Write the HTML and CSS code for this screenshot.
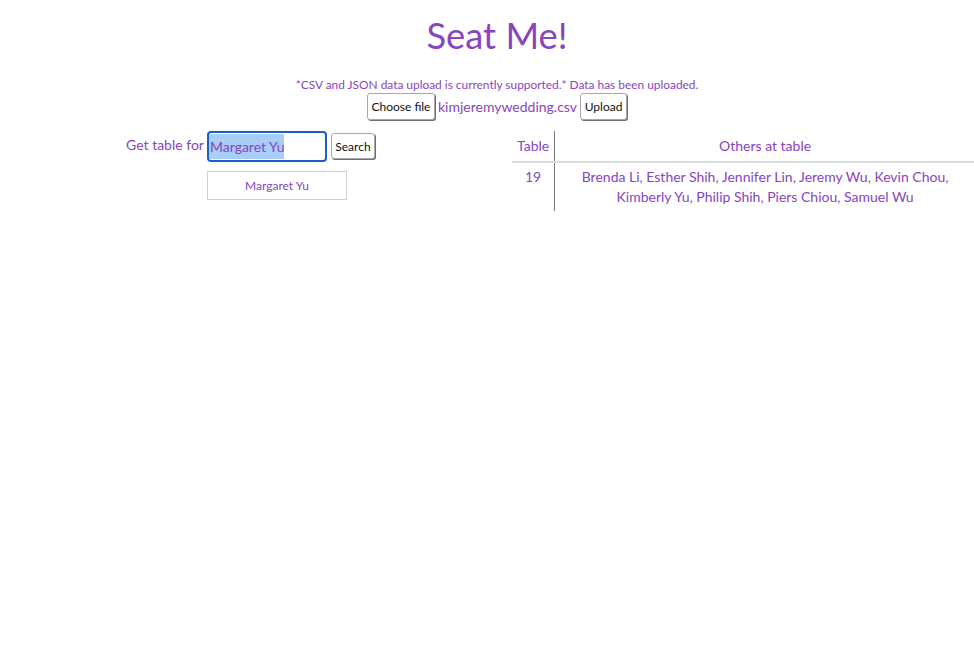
FILE: index.html
```html
<!DOCTYPE html>
<html lang="en">
<head>
<meta charset="utf-8">
<title>Seat Me!</title>
<link rel="stylesheet" href="styles.css">
</head>
<body>
<div class="page">
  <h1 class="title">Seat Me!</h1>
  <p class="note">*CSV and JSON data upload is currently supported.* Data has been uploaded.</p>
  <div class="upload">
    <button class="btn btn-file">Choose file</button>
    <span class="filename">kimjeremywedding.csv</span>
    <button class="btn btn-upload">Upload</button>
  </div>
  <div class="main">
    <div class="col col-left">
      <div class="search">
        <span class="label">Get table for</span>
        <div class="field">
          <div class="input"><span class="sel">Margaret Yu</span></div>
          <div class="suggest">Margaret Yu</div>
        </div>
        <button class="btn btn-search">Search</button>
      </div>
    </div>
    <div class="col col-right">
      <table class="seats">
        <thead>
          <tr><th class="c-table">Table</th><th class="c-others">Others at table</th></tr>
        </thead>
        <tbody>
          <tr><td class="c-table">19</td><td class="c-others">Brenda Li, Esther Shih, Jennifer Lin, Jeremy Wu, Kevin Chou, Kimberly Yu, Philip Shih, Piers Chiou, Samuel Wu</td></tr>
        </tbody>
      </table>
    </div>
  </div>
</div>
</body>
</html>
```
FILE: styles.css
```css
html, body {
  margin: 0;
  padding: 0;
  overflow: hidden;
  background: #fff;
}
body {
  font-family: Lato, "Noto Sans", sans-serif;
  color: #8745c1;
}
.page {
  width: 994px;
}
.title {
  margin: 13px 0 0;
  font-size: 36.3px;
  font-weight: 400;
  line-height: 44px;
  text-align: center;
}
.note {
  margin: 20px 0 0;
  font-size: 11.9px;
  line-height: 16px;
  text-align: center;
}
.upload {
  display: flex;
  justify-content: center;
  align-items: center;
  gap: 3px;
  margin-top: 0;
}
.btn {
  font-family: Lato, "Noto Sans", sans-serif;
  font-size: 12px;
  color: #111;
  background: #fff;
  border: 1px solid #a8a8a8;
  border-radius: 3px;
  box-shadow: 1px 1px 0 #6f6f6f;
  padding: 0 2px;
  height: 27px;
  margin: 0;
  white-space: nowrap;
}
.btn-file { width: 68px; }
.btn-upload { width: 47px; }
.filename {
  font-size: 14px;
  line-height: 20px;
}
.main {
  display: flex;
  margin-top: 11px;
}
.col {
  flex: 0 0 497px;
}
.search {
  display: flex;
  justify-content: center;
  align-items: flex-start;
  padding-left: 4px;
}
.label {
  font-size: 14px;
  line-height: 20px;
  margin-top: 4px;
  margin-right: 3px;
}
.field {
  position: relative;
  width: 120px;
}
.input {
  box-sizing: border-box;
  width: 120px;
  height: 31px;
  border: 2px solid #1b5fcc;
  border-radius: 4px;
  padding: 1px 0;
  font-size: 14px;
  line-height: 25px;
}
.sel {
  display: inline-block;
  background: #a8cdf6;
  color: #8745c1;
  padding: 0 0 0 1px;
  height: 25px;
}
.suggest {
  position: absolute;
  left: 0;
  top: 40px;
  box-sizing: border-box;
  width: 140px;
  height: 29px;
  border: 1px solid #cfcfcf;
  font-size: 12px;
  line-height: 27px;
  text-align: center;
}
.btn-search {
  margin-left: 4px;
  margin-top: 2px;
  width: 44px;
  height: 26px;
}
.seats {
  margin-left: 15px;
  width: 463px;
  border-collapse: collapse;
  font-size: 14px;
  line-height: 20px;
}
.seats th, .seats td {
  font-weight: 400;
  text-align: center;
  padding: 5px 5px;
  vertical-align: top;
}
.seats th {
  border-bottom: 2px solid #dcdcdc;
}
.seats td {
  padding-top: 4px;
  padding-bottom: 4px;
}
.seats .c-table {
  width: 32px;
  border-right: 1px solid #7a7a7a;
}
```
